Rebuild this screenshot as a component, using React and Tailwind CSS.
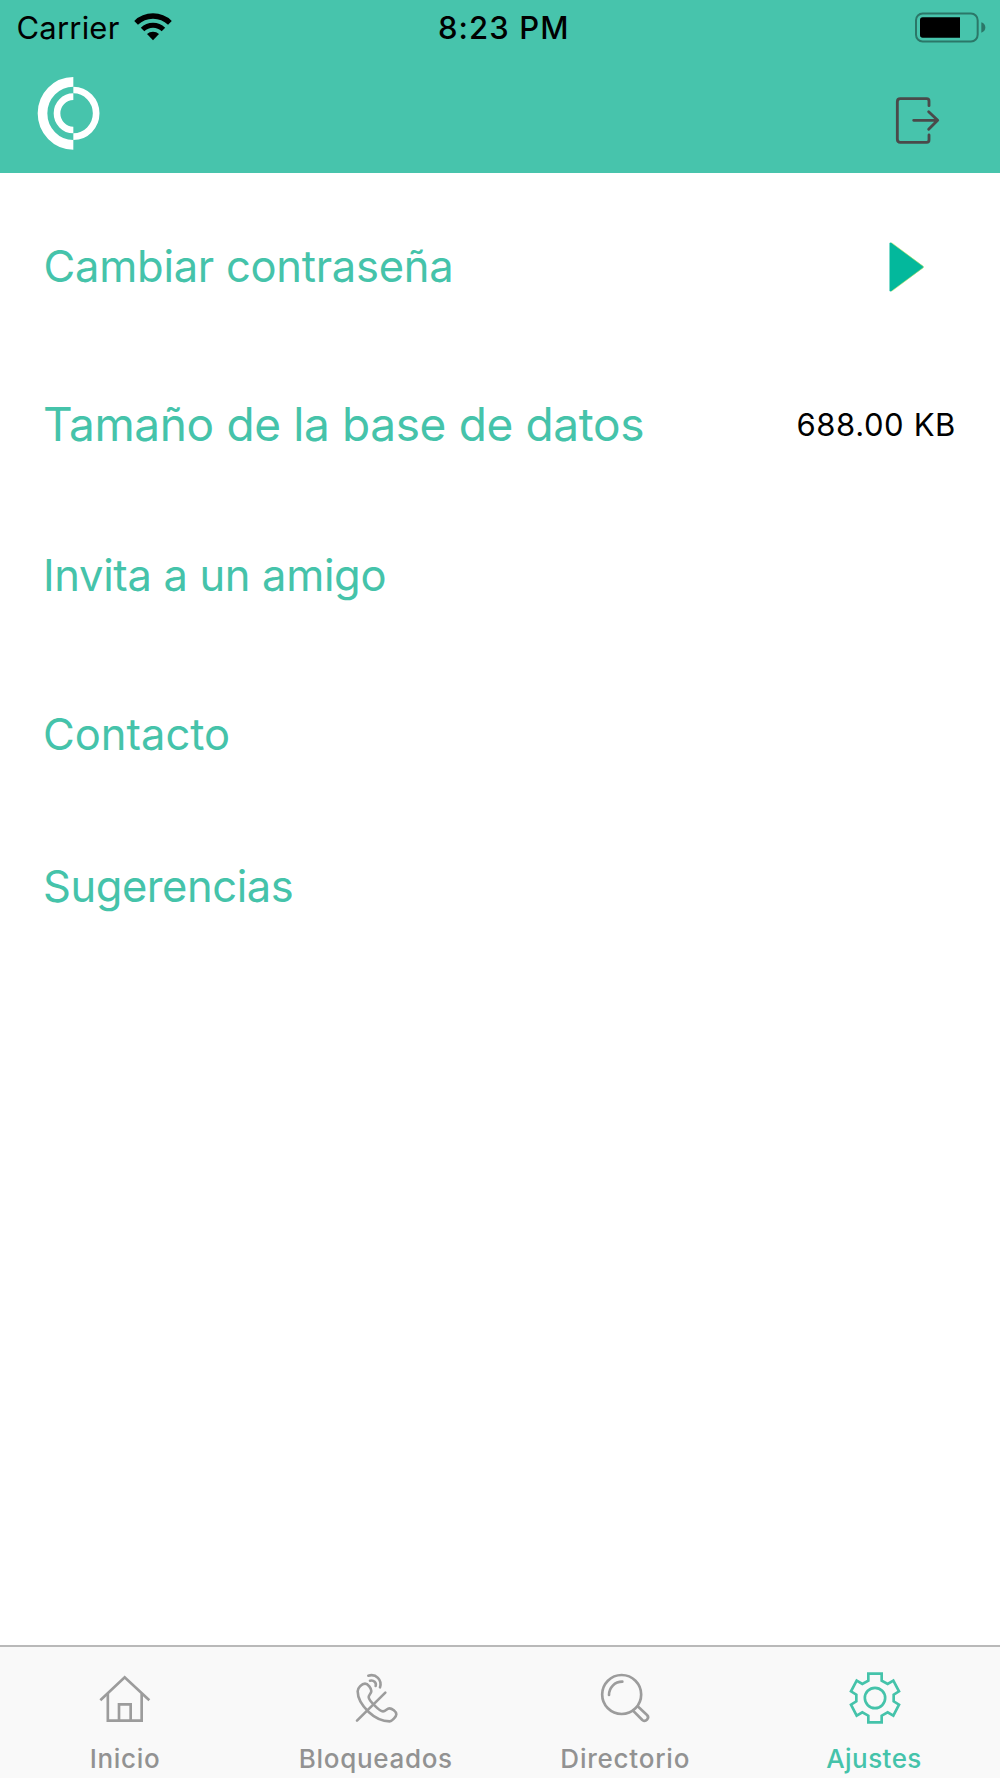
import React from "react";

function WifiIcon() {
  return (
    <svg className="ml-[13.500px] mt-[9px] h-[29px] w-[40px]" viewBox="400 36 120 87" fill="none" stroke="#000">
      <path d="M409.3 68.5A73 73 0 0 1 510.7 68.5" strokeWidth="16" />
      <path d="M428.7 88.6A45 45 0 0 1 491.3 88.6" strokeWidth="15" />
      <path d="M460 121L442 102.3A26 26 0 0 1 478 102.3Z" fill="#000" stroke="none" />
    </svg>
  );
}

function BatteryIcon() {
  return (
    <svg className="mr-[14px] ml-auto mt-[9px] h-[31px] w-[72px]" viewBox="162 36 216 93" fill="none">
      <rect x="168" y="40.500" width="185" height="84" rx="20" stroke="#2b7768" strokeWidth="6" />
      <path d="M188 52H300V113H188Q180 113 180 105V60Q180 52 188 52Z" fill="#000" />
      <path d="M364 67Q376 71 376 82.500Q376 94 364 98Z" fill="#2b7768" />
    </svg>
  );
}

function Logo() {
  return (
    <svg className="h-[75px] w-[64px]" viewBox="108 228 192 225" fill="none" stroke="#fff">
      <path d="M220 245.500A92.500 94.500 0 0 0 220 434.500" strokeWidth="29" />
      <path d="M220 290A49 50 0 0 0 220 390" strokeWidth="20" />
      <path d="M220 270A68.500 70 0 0 1 220 410" strokeWidth="20" />
    </svg>
  );
}

function LogoutIcon() {
  return (
    <svg
      className="h-[49px] w-[45px]"
      viewBox="105 288 135 147"
      fill="none"
      stroke="#4a4a4a"
      strokeWidth="8.5"
      strokeLinecap="round"
      strokeLinejoin="round"
    >
      <path d="M207 317V303Q207 296 200 296H121Q112 296 112 305V418Q112 427 121 427H200Q207 427 207 420V405" />
      <path d="M161 361H233M206 335L233 361L206 388" />
    </svg>
  );
}

function HomeIcon() {
  return (
    <svg className="h-[60px] w-[60px]" viewBox="105 113 180 180" fill="none" stroke="currentColor" strokeWidth="8">
      <path d="M121 210L194 141L268 210" />
      <path d="M143.500 190V271H245V190" />
      <path d="M177 271V222H212V271" />
    </svg>
  );
}

function BlockedIcon() {
  return (
    <svg
      className="h-[60px] w-[60px]"
      viewBox="165 113 180 180"
      fill="none"
      stroke="currentColor"
      strokeWidth="7.8"
      strokeLinecap="round"
      strokeLinejoin="round"
    >
      <path d="M225 160C216 160 203 172 203 183C203 203 216 226 236 245C256 264 280 273 299 273C306 273 319 259 319 252C319 244 306 234 298 234C291 234 287 243 279 243C268 243 236 210 236 200C236 193 244 190 244 182C244 174 234 160 225 160Z" />
      <path d="M286 187L201 271" />
      <path d="M240 151C251 148 260 157 257 167" />
      <path d="M235 136C258 129 277 149 270 171" />
    </svg>
  );
}

function SearchIcon() {
  return (
    <svg
      className="h-[60px] w-[60px]"
      viewBox="135 113 180 180"
      fill="none"
      stroke="currentColor"
      strokeWidth="8"
      strokeLinecap="round"
      strokeLinejoin="round"
    >
      <circle cx="215" cy="192.500" r="58.500" />
      <path d="M177 194Q177 177 189 165Q200 154 217 154" />
      <path d="M263 228L291 254C300 263 287 277 277 269L249 241" />
    </svg>
  );
}

function GearIcon() {
  return (
    <svg className="h-[60px] w-[60px]" viewBox="135 113 180 180" fill="none" stroke="currentColor" strokeWidth="8">
      <path d="M205 130H245V151L263 161L280 151L297 183L281 193V213L297 223L280 256L263 246L245 256V276H205V256L187 246L170 256L153 223L169 213V193L153 183L170 151L187 161L205 151Z" />
      <circle cx="225" cy="203" r="30.500" />
    </svg>
  );
}

function Tab({ icon, label, active, className }) {
  return (
    <div className={`flex w-[250px] flex-col items-center ${active ? "text-[#45c3aa]" : "text-[#9c9c9c]"}`}>
      {icon}
      <span
        className={`mt-[15px] text-[26px] leading-[31px] font-medium whitespace-nowrap ${
          active ? "text-[#45c3aa]" : "text-[#929292]"
        } ${className}`}
      >
        {label}
      </span>
    </div>
  );
}

export default function App() {
  return (
    <div className="flex h-[1778px] w-[1000px] flex-col overflow-hidden bg-white font-['Inter','Liberation_Sans',sans-serif]">
      <header className="flex h-[173px] flex-col bg-[#47c4ac]">
        <div className="flex h-[52px] items-start pt-[3px] text-[31px] leading-[49px] text-black">
          <div className="flex w-[438px] items-start pl-[16.500px]">
            <span className="tracking-[0.200px]">Carrier</span>
            <WifiIcon />
          </div>
          <span className="font-medium tracking-[1.100px]">8:23 PM</span>
          <BatteryIcon />
        </div>
        <div className="flex items-start justify-between pr-[60px] pl-[36px] pt-[24px]">
          <Logo />
          <div className="pt-[20px]">
            <LogoutIcon />
          </div>
        </div>
      </header>

      <main className="flex flex-1 flex-col pt-[63px] pl-[43px] text-[43.500px] leading-[60px] whitespace-nowrap text-[#45c3aa]">
        <div className="flex h-[60px] items-start justify-between pr-[75px]">
          <span className="pl-[0.500px] tracking-[-0.265px]">Cambiar contraseña</span>
          <svg className="mt-[5px] h-[52px] w-[37px]" viewBox="0 0 37 52">
            <path
              d="M1.500 2Q2.500 1 4 2.200L35 25Q36 26 35 27L4 49.800Q2.500 51 1.500 50Z"
              fill="#03b89c"
            />
            <path d="M3.500 1.700L35.300 25.500V26.500L3.500 50.300" fill="none" stroke="#b5e05a" strokeWidth="0.600" />
          </svg>
        </div>
        <div className="mt-[98px] flex h-[60px] items-start justify-between pr-[44px]">
          <span className="text-[46px] tracking-[-0.370px]">Tamaño de la base de datos</span>
          <span className="mt-[6px] text-[31px] leading-[49px] tracking-[0.620px] text-black">688.00 KB</span>
        </div>
        <div className="mt-[91px] h-[60px] tracking-[-0.340px]">Invita a un amigo</div>
        <div className="mt-[99px] h-[60px]">Contacto</div>
        <div className="mt-[92px] h-[60px] tracking-[-0.450px]">Sugerencias</div>
      </main>

      <nav className="flex h-[133px] border-t-2 border-[#b9b9b9] bg-[#f9f9f9] pt-[21px]">
        <Tab icon={<HomeIcon />} label="Inicio" className="tracking-[0.680px]" />
        <Tab icon={<BlockedIcon />} label="Bloqueados" className="pl-[1.500px] tracking-[0.680px]" />
        <Tab icon={<SearchIcon />} label="Directorio" className="pl-[0.500px] tracking-[0.770px]" />
        <Tab icon={<GearIcon />} label="Ajustes" active className="pr-[2px] tracking-[0.450px]" />
      </nav>
    </div>
  );
}
